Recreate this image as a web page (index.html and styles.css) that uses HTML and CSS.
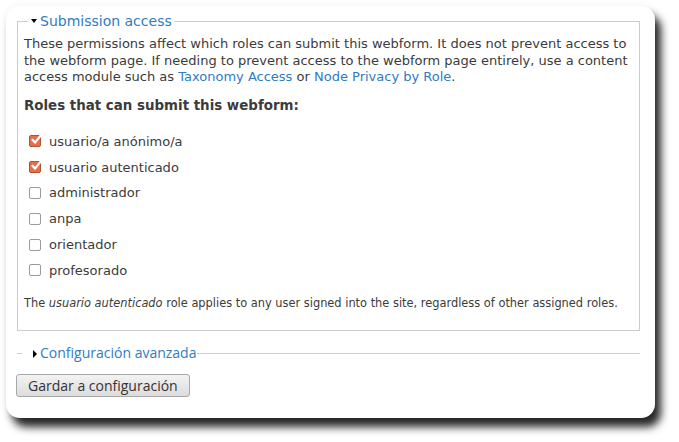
FILE: index.html
```html
<!DOCTYPE html>
<html>
<head>
<meta charset="utf-8">
<link rel="stylesheet" href="styles.css">
</head>
<body>
<div class="card">
  <fieldset class="box">
    <legend class="legend"><span class="tri-down"></span><a href="#">Submission access</a></legend>
    <p class="intro">These permissions affect which roles can submit this webform. It does not prevent access to the webform page. If needing to prevent access to the webform page entirely, use a content access module such as <a href="#">Taxonomy Access</a> or <a href="#">Node Privacy by Role</a>.</p>
    <div class="roles-title">Roles that can submit this webform:</div>
    <ul class="roles">
      <li><span class="cb checked"><svg width="12" height="12" viewBox="0 0 12 12"><path d="M2.5 5.8 L5 8.6 L10.5 1.8" fill="none" stroke="#fff" stroke-width="2.2" stroke-linecap="round" stroke-linejoin="round"/></svg></span>usuario/a anónimo/a</li>
      <li><span class="cb checked"><svg width="12" height="12" viewBox="0 0 12 12"><path d="M2.5 5.8 L5 8.6 L10.5 1.8" fill="none" stroke="#fff" stroke-width="2.2" stroke-linecap="round" stroke-linejoin="round"/></svg></span>usuario autenticado</li>
      <li><span class="cb"></span>administrador</li>
      <li><span class="cb"></span>anpa</li>
      <li><span class="cb"></span>orientador</li>
      <li><span class="cb"></span>profesorado</li>
    </ul>
    <p class="note">The <em>usuario autenticado</em> role applies to any user signed into the site, regardless of other assigned roles.</p>
  </fieldset>
  <fieldset class="collapsed">
    <legend class="legend2"><span class="tri-right"></span><a href="#">Configuración avanzada</a></legend>
  </fieldset>
  <button class="btn" type="button">Gardar a configuración</button>
</div>
</body>
</html>
```
FILE: styles.css
```css
html, body {
  margin: 0;
  padding: 0;
  background: #fff;
}
body {
  font-family: "DejaVu Sans", sans-serif;
  color: #3b3b3b;
  font-size: 13px;
  min-height: 442px;
  padding-top: 6px;
  box-sizing: border-box;
}
a {
  color: #2f7cbf;
  text-decoration: none;
}
.card {
  margin: 0 0 0 6px;
  width: 649px;
  height: 412px;
  box-sizing: border-box;
  background: #fff;
  border-radius: 14px;
  box-shadow: 6px 9px 8px rgba(0,0,0,0.85), 0 0 10px rgba(0,0,0,0.06);
  padding: 6px 15px 0 11px;
}
.box {
  margin: 0;
  border: 1px solid #cccccc;
  padding: 0 10px 0 6px;
}
.legend {
  padding: 0 2px 0 3px;
  font-size: 14px;
  line-height: 18px;
  margin-left: 4px;
}
.tri-down {
  display: inline-block;
  width: 0;
  height: 0;
  border-left: 3.5px solid transparent;
  border-right: 3.5px solid transparent;
  border-top: 4px solid #000;
  vertical-align: middle;
  margin-right: 3px;
  position: relative;
  top: -1px;
}
.intro {
  margin: 6px 0 0 0;
  line-height: 16.5px;
}
.roles-title {
  font-weight: bold;
  font-size: 13.4px;
  margin-top: 11px;
  line-height: 18px;
}
.roles {
  list-style: none;
  margin: 14px 0 0 0;
  padding: 0 0 0 5px;
}
.roles li {
  height: 25.8px;
  display: flex;
  align-items: center;
}
.cb {
  width: 10px;
  height: 10px;
  border: 1px solid #9a9a9a;
  border-radius: 2px;
  background: #fff;
  margin-right: 8px;
  display: inline-flex;
  align-items: center;
  justify-content: center;
  position: relative;
}
.cb.checked {
  background: #e2704b;
  border-color: #b5512f;
}
.cb svg {
  position: absolute;
  left: 0;
  top: -2px;
}
.note {
  font-size: 11.4px;
  margin: 13px 0 20px 0;
  line-height: 14px;
}
.collapsed {
  margin: 13px 0 0 0;
  border: 0;
  border-top: 1px solid #cccccc;
  padding: 0;
  height: 0;
}
.legend2 {
  margin-left: 5px;
  padding: 0 1px 0 11px;
  font-family: "Open Sans", sans-serif;
  font-size: 14px;
  line-height: 18px;
}
.tri-right {
  display: inline-block;
  width: 0;
  height: 0;
  border-top: 4px solid transparent;
  border-bottom: 4px solid transparent;
  border-left: 4px solid #000;
  vertical-align: middle;
  margin-right: 3px;
  position: relative;
  top: -1px;
}
.btn {
  margin-top: 12px;
  margin-left: -1px;
  display: block;
  height: 23px;
  padding: 0 11px;
  font-family: "Open Sans", sans-serif;
  font-size: 14px;
  color: #333;
  border: 1px solid #a8a8a8;
  border-radius: 3px;
  background: linear-gradient(#f3f3f3, #dcdcdc);
}
```
